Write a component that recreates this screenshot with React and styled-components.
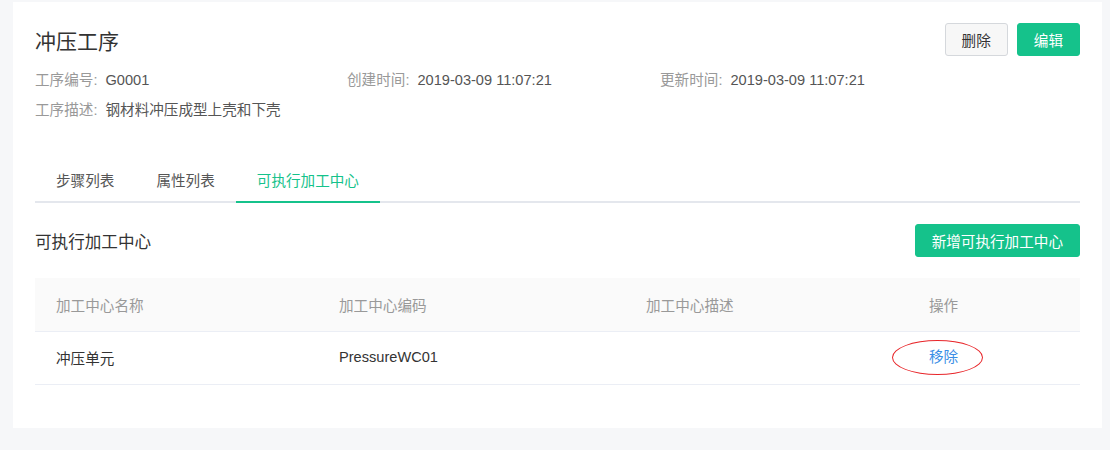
import React from 'react';
import styled, { createGlobalStyle } from 'styled-components';

const GlobalStyle = createGlobalStyle`
  html, body {
    margin: 0;
    padding: 0;
    background: #f6f7f9;
    font-family: "Liberation Sans", "Noto Sans CJK SC", sans-serif;
  }
`;

const Page = styled.div`
  padding: 2px 8px 0 13px;
  height: 450px;
  box-sizing: border-box;
`;

const Card = styled.div`
  width: 1089px;
  background: #fff;
  box-sizing: border-box;
  padding: 21px 22px 43px 22px;
`;

const Header = styled.div`
  display: flex;
  justify-content: space-between;
  align-items: center;
  height: 33px;
`;

const Title = styled.h1`
  margin: 0;
  font-size: 21px;
  font-weight: normal;
  color: #333;
`;

const Actions = styled.div`
  display: flex;
  gap: 9px;
`;

const Button = styled.button`
  height: 33px;
  padding: 0 16px;
  font-family: inherit;
  font-size: 14.6px;
  border-radius: 3px;
  cursor: pointer;
  border: 1px solid ${(p) => (p.$primary ? '#15c28b' : '#d5d8dc')};
  background: ${(p) => (p.$primary ? '#15c28b' : '#f7f7f7')};
  color: ${(p) => (p.$primary ? '#fff' : '#333')};
`;

const InfoGrid = styled.div`
  display: grid;
  grid-template-columns: 312px 313px 1fr;
  margin-top: 9px;
`;

const InfoItem = styled.div`
  grid-column: ${(p) => p.$span || 'auto'};
  height: 30px;
  line-height: 30px;
  font-size: 14.6px;
  color: #555;
`;

const Label = styled.span`
  color: #999;
  margin-right: 8px;
`;

const Tabs = styled.div`
  display: flex;
  margin-top: 36px;
  border-bottom: 2px solid #e4e7ed;
`;

const Tab = styled.div`
  height: 40px;
  line-height: 40px;
  padding: 0 21px;
  font-size: 14.6px;
  color: ${(p) => (p.$active ? '#15c28b' : '#555')};
  margin-bottom: -2px;
  border-bottom: 2px solid ${(p) => (p.$active ? '#15c28b' : 'transparent')};
`;

const SectionHead = styled.div`
  display: flex;
  justify-content: space-between;
  align-items: center;
  margin-top: 21px;
`;

const SectionTitle = styled.h2`
  margin: 0;
  font-size: 16.6px;
  font-weight: normal;
  color: #333;
`;

const Table = styled.table`
  width: 100%;
  margin-top: 21px;
  border-collapse: collapse;
  table-layout: fixed;
  font-size: 14.6px;
`;

const Th = styled.th`
  height: 53px;
  padding: 0 0 0 21px;
  text-align: left;
  font-weight: normal;
  color: #999;
  background: #fafafa;
  border-bottom: 1px solid #ebeef5;
`;

const Td = styled.td`
  height: 50px;
  padding: 0 0 2px 21px;
  color: #333;
  border-bottom: 1px solid #ebeef5;
`;

const LinkWrap = styled.span`
  position: relative;
  display: inline-block;
  line-height: 20px;
`;

const Link = styled.a`
  color: #3a8ee6;
  text-decoration: none;
  cursor: pointer;
`;

const Mark = styled.span`
  position: absolute;
  left: -37px;
  top: -7px;
  width: 89px;
  height: 33px;
  border: 1.5px solid #e8262a;
  border-radius: 50%;
  pointer-events: none;
`;

const columns = [
  { title: '加工中心名称', width: 283 },
  { title: '加工中心编码', width: 307 },
  { title: '加工中心描述', width: 283 },
  { title: '操作' },
];

const rows = [{ name: '冲压单元', code: 'PressureWC01', desc: '' }];

export default function App() {
  return (
    <>
      <GlobalStyle />
      <Page>
        <Card>
          <Header>
            <Title>冲压工序</Title>
            <Actions>
              <Button>删除</Button>
              <Button $primary>编辑</Button>
            </Actions>
          </Header>
          <InfoGrid>
            <InfoItem><Label>工序编号:</Label>G0001</InfoItem>
            <InfoItem><Label>创建时间:</Label>2019-03-09 11:07:21</InfoItem>
            <InfoItem><Label>更新时间:</Label>2019-03-09 11:07:21</InfoItem>
            <InfoItem $span="1 / 4"><Label>工序描述:</Label>钢材料冲压成型上壳和下壳</InfoItem>
          </InfoGrid>
          <Tabs>
            <Tab>步骤列表</Tab>
            <Tab>属性列表</Tab>
            <Tab $active>可执行加工中心</Tab>
          </Tabs>
          <SectionHead>
            <SectionTitle>可执行加工中心</SectionTitle>
            <Button $primary>新增可执行加工中心</Button>
          </SectionHead>
          <Table>
            <colgroup>
              {columns.map((c) => (
                <col key={c.title} style={c.width ? { width: c.width } : undefined} />
              ))}
            </colgroup>
            <thead>
              <tr>
                {columns.map((c) => (
                  <Th key={c.title}>{c.title}</Th>
                ))}
              </tr>
            </thead>
            <tbody>
              {rows.map((r) => (
                <tr key={r.code}>
                  <Td>{r.name}</Td>
                  <Td>{r.code}</Td>
                  <Td>{r.desc}</Td>
                  <Td>
                    <LinkWrap>
                      <Link>移除</Link>
                      <Mark />
                    </LinkWrap>
                  </Td>
                </tr>
              ))}
            </tbody>
          </Table>
        </Card>
      </Page>
    </>
  );
}
